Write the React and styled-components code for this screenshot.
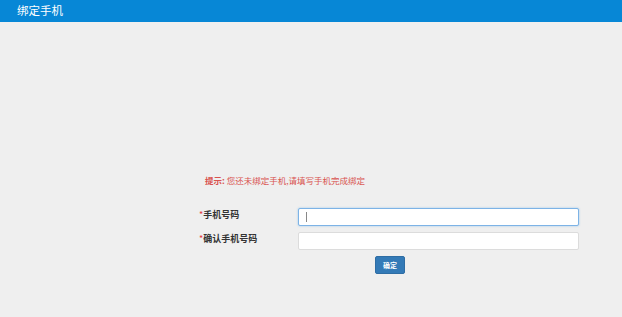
import React from 'react';
import styled, { createGlobalStyle } from 'styled-components';

const Global = createGlobalStyle`
  html, body {
    margin: 0;
    padding: 0;
    background: #efefef;
    font-family: "Noto Sans CJK SC", "Liberation Sans", sans-serif;
  }
`;

const Page = styled.div`
  width: 622px;
  height: 317px;
  background: #efefef;
  overflow: hidden;
`;

const Header = styled.div`
  height: 22px;
  background: #0787d6;
  color: #fff;
  font-size: 11.5px;
  line-height: 20px;
  padding-left: 17px;
`;

const Body = styled.div`
  padding: 152px 0 0 199px;
`;

const Hint = styled.div`
  margin-left: 6px;
  color: #d9534f;
  font-size: 8.5px;
  line-height: 12px;
  height: 12px;
  b {
    font-weight: bold;
  }
`;

const Form = styled.div`
  margin-top: 22px;
  display: grid;
  grid-template-columns: 99px 281px;
  row-gap: 6px;
`;

const Label = styled.label`
  font-size: 9px;
  font-weight: bold;
  color: #333;
  line-height: 12px;
  padding-top: 1px;
  span {
    color: #e4393c;
    font-weight: normal;
  }
`;

const FieldWrap = styled.div`
  position: relative;
  height: ${p => p.$h}px;
`;

const Field = styled.input`
  display: block;
  box-sizing: border-box;
  width: 100%;
  height: 100%;
  margin: 0;
  padding: 0 6px;
  background: #fff;
  border: 1px solid ${p => (p.$focus ? '#7db3e6' : '#dcdcdc')};
  border-radius: 2px;
  box-shadow: ${p => (p.$focus ? '0 0 2px rgba(102,175,233,0.7)' : 'none')};
  outline: none;
  font-size: 9px;
`;

const Caret = styled.span`
  position: absolute;
  left: 8px;
  top: 4px;
  width: 1px;
  height: 10px;
  background: #888;
`;

const Actions = styled.div`
  grid-column: 1 / span 2;
  padding-left: 176px;
`;

const Button = styled.button`
  display: block;
  width: 30px;
  height: 18px;
  padding: 0;
  border: 1px solid #2e6da4;
  border-radius: 2px;
  background: #337ab7;
  color: #fff;
  font-family: inherit;
  font-size: 7px;
  font-weight: bold;
  line-height: 16px;
`;

export default function App() {
  return (
    <Page>
      <Global />
      <Header>绑定手机</Header>
      <Body>
        <Hint><b>提示:</b> 您还未绑定手机,请填写手机完成绑定</Hint>
        <Form>
          <Label><span>*</span>手机号码</Label>
          <FieldWrap $h={18}>
            <Field $focus />
            <Caret />
          </FieldWrap>
          <Label><span>*</span>确认手机号码</Label>
          <FieldWrap $h={18}>
            <Field />
          </FieldWrap>
          <Actions>
            <Button>确定</Button>
          </Actions>
        </Form>
      </Body>
    </Page>
  );
}
